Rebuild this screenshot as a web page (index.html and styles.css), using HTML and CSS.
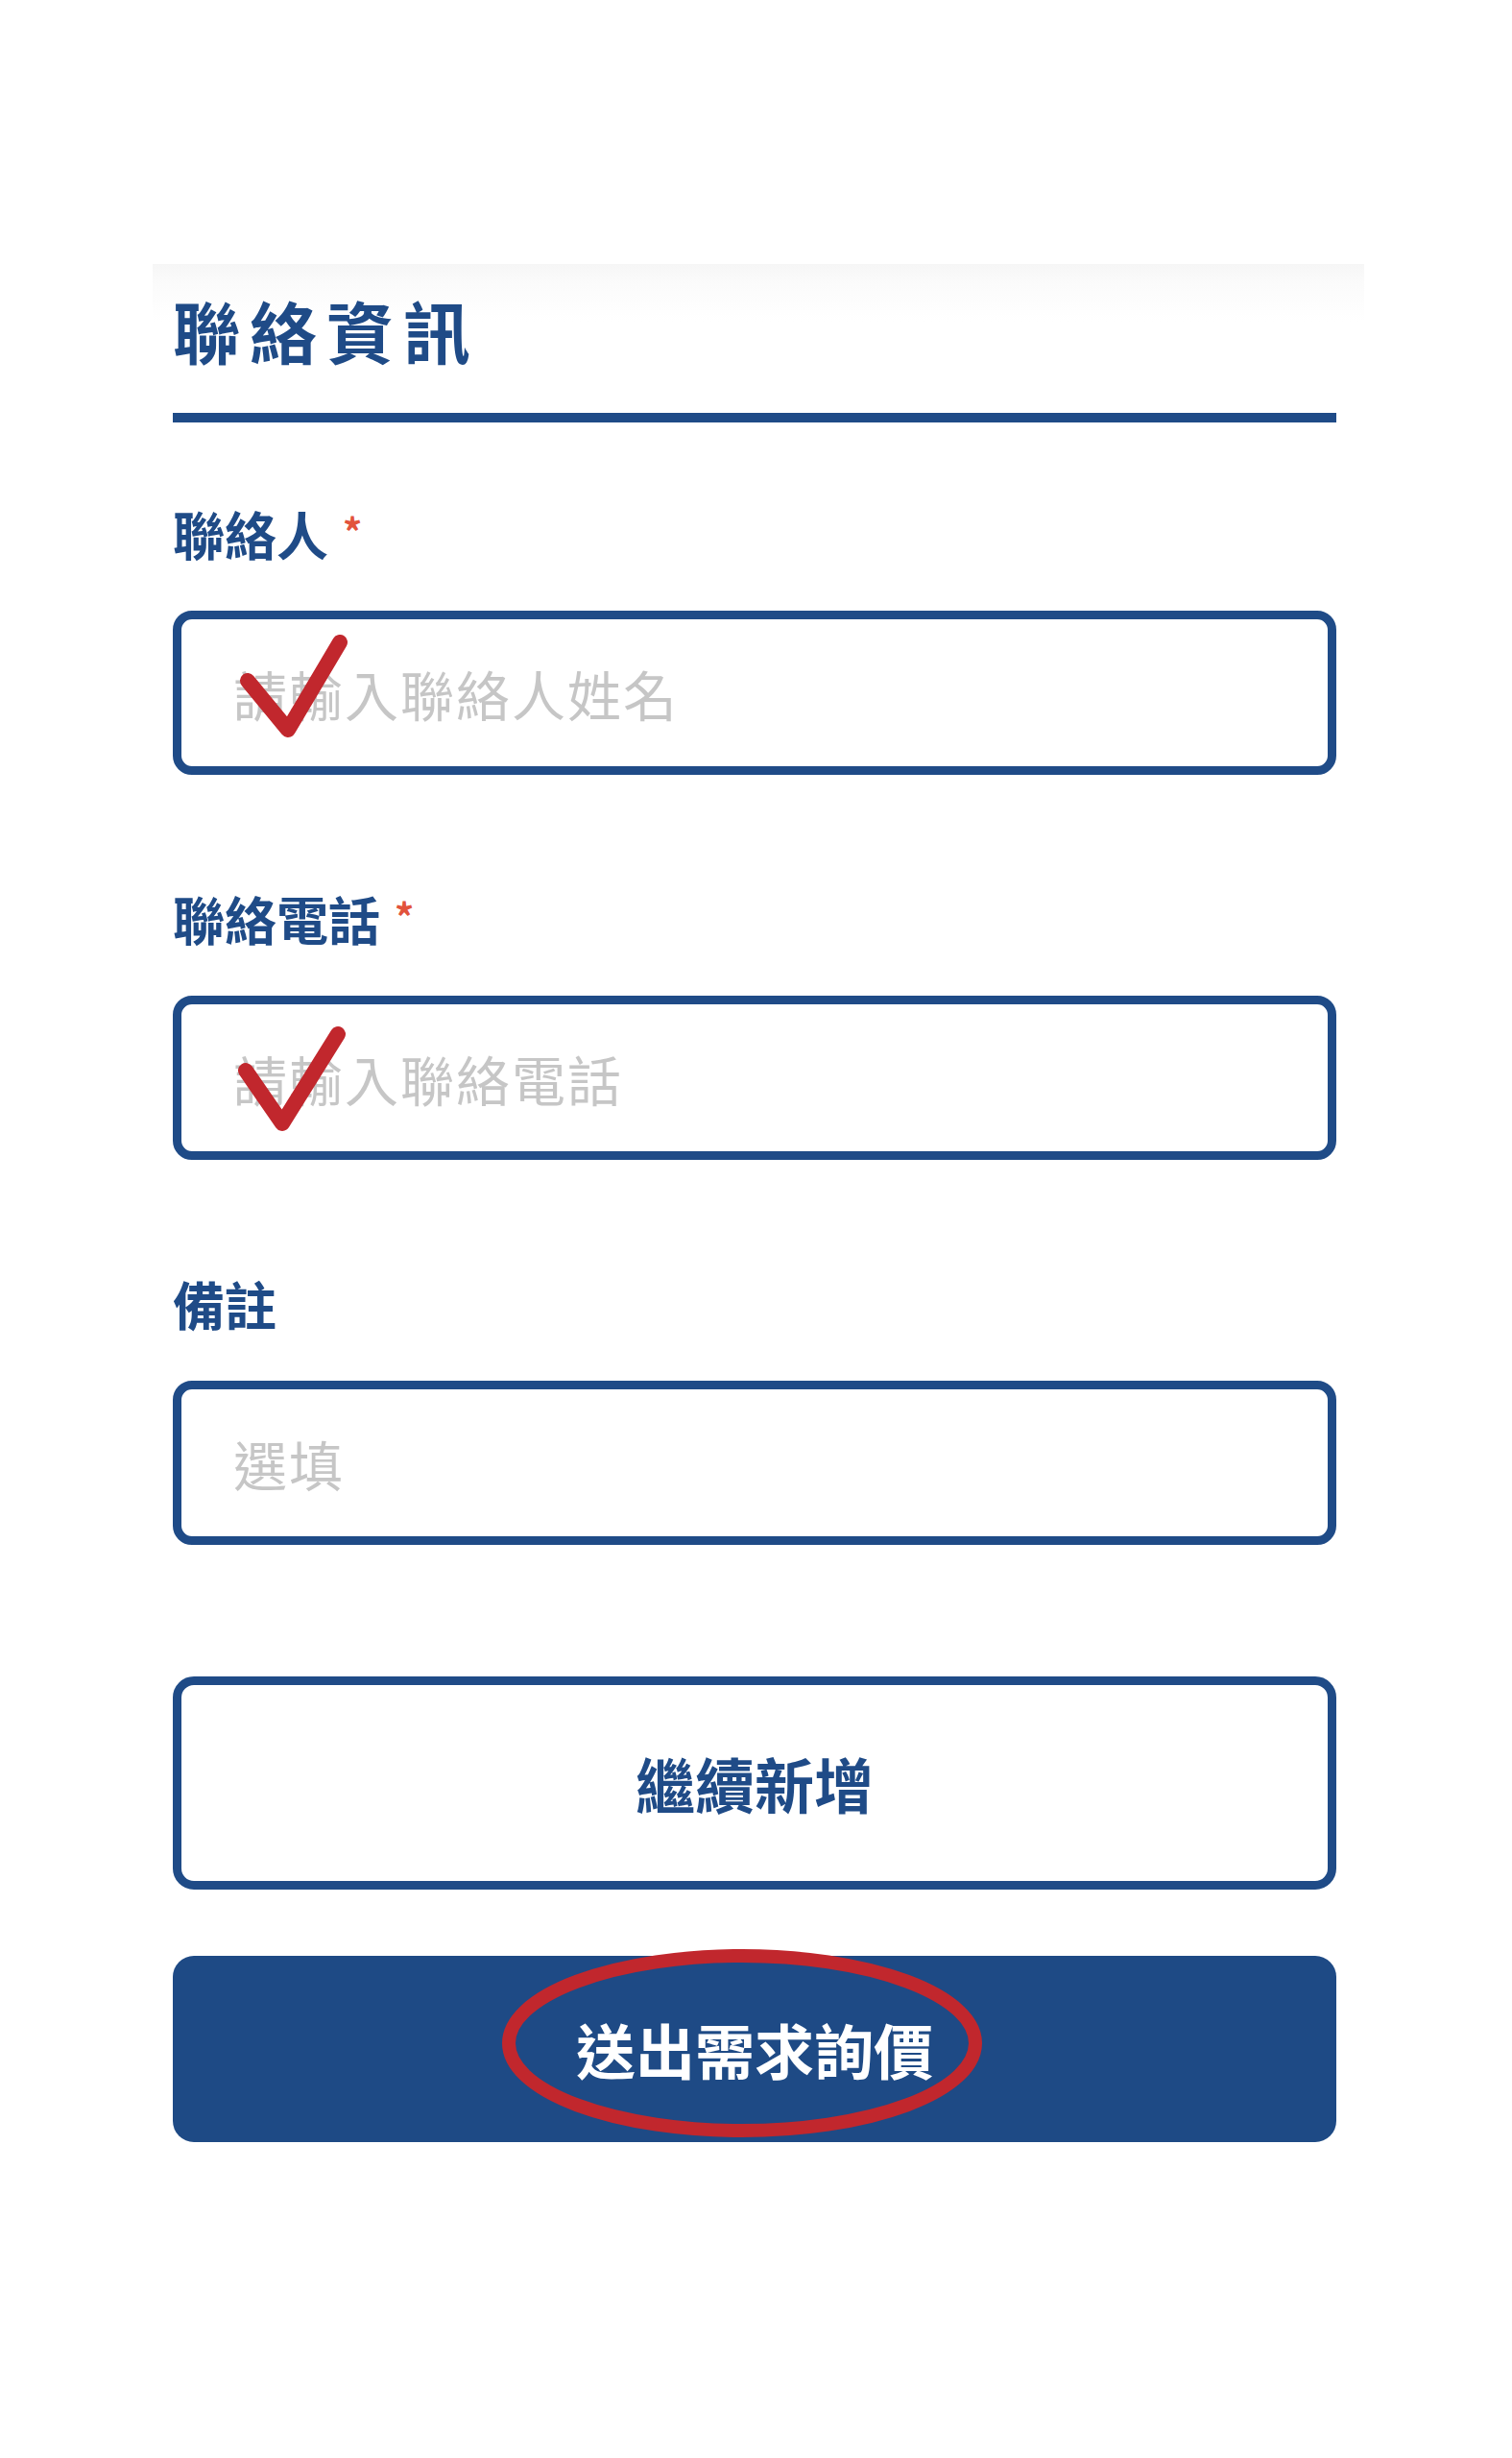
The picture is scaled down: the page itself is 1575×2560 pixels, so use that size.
FILE: index.html
```html
<!DOCTYPE html>
<html lang="zh-Hant">
<head>
<meta charset="utf-8">
<title>聯絡資訊</title>
<link rel="stylesheet" href="styles.css">
</head>
<body>
<main class="card">
  <h2 class="title">聯絡資訊</h2>
  <div class="rule"></div>

  <div class="field">
    <label class="label">聯絡人<span class="req">*</span></label>
    <div class="input-wrap">
      <input class="input" type="text" placeholder="請輸入聯絡人姓名">
      <svg class="check check-a" viewBox="0 0 120 120" aria-hidden="true"><polyline points="10,48 52,99 106,8"/></svg>
    </div>
  </div>

  <div class="field">
    <label class="label">聯絡電話<span class="req">*</span></label>
    <div class="input-wrap">
      <input class="input" type="text" placeholder="請輸入聯絡電話">
      <svg class="check check-b" viewBox="0 0 120 120" aria-hidden="true"><polyline points="10,48 48,103 106,10"/></svg>
    </div>
  </div>

  <div class="field">
    <label class="label">備註</label>
    <div class="input-wrap">
      <input class="input" type="text" placeholder="選填">
    </div>
  </div>

  <div class="actions">
    <button class="btn btn-outline" type="button">繼續新增</button>
    <div class="submit-wrap">
      <button class="btn btn-solid" type="button">送出需求詢價</button>
      <svg class="ring" viewBox="0 0 520 210" aria-hidden="true"><ellipse cx="260" cy="105" rx="243" ry="91"/></svg>
    </div>
  </div>
</main>
</body>
</html>
```
FILE: styles.css
```css
* { box-sizing: border-box; }
html, body { margin: 0; padding: 0; background: #ffffff; }
body {
  font-family: "Noto Sans CJK TC", "Noto Sans", sans-serif;
  color: #1f4b87;
}
.card {
  width: 1262px;
  margin: 275px 0 0 159px;
  padding: 34px 29px 120px 21px;
  background: linear-gradient(#f6f6f6 0, #fbfbfb 20px, #ffffff 60px);
}
.title {
  margin: 0;
  font-size: 70px;
  line-height: 70px;
  font-weight: 700;
  letter-spacing: 10px;
  color: #1f4b87;
}
.rule {
  height: 10px;
  margin-top: 51px;
  background: #1f4b87;
}
.field { margin-top: 89px; }
.field + .field { margin-top: 123px; }
.label {
  display: flex;
  align-items: flex-start;
  font-size: 54px;
  line-height: 54px;
  font-weight: 700;
  color: #1f4b87;
}
.req {
  font-size: 40px;
  line-height: 40px;
  font-weight: 700;
  margin-left: 15px;
  margin-top: 4px;
  color: #e2533c;
}
.input-wrap {
  position: relative;
  margin-top: 53px;
}
.input {
  display: block;
  width: 100%;
  height: 171px;
  border: 9px solid #1f4b87;
  border-radius: 20px;
  padding: 0 0 0 54px;
  font-family: "Noto Sans CJK TC", "Noto Sans", sans-serif;
  font-size: 56px;
  letter-spacing: 2px;
  color: #333;
  background: #fff;
  outline: none;
}
.input::placeholder { color: #c6c6c6; }
.check {
  position: absolute;
  width: 120px;
  height: 120px;
  fill: none;
  stroke: #c1272d;
  stroke-width: 16;
  stroke-linecap: round;
  stroke-linejoin: round;
}
.check-a { left: 68px; top: 25px; }
.check-b { left: 66px; top: 30px; }
.actions {
  margin-top: 137px;
  display: flex;
  flex-direction: column;
  gap: 69px;
}
.btn {
  display: block;
  width: 100%;
  font-family: "Noto Sans CJK TC", "Noto Sans", sans-serif;
  font-weight: 700;
  font-size: 62px;
  line-height: 62px;
  border-radius: 22px;
  cursor: pointer;
}
.btn-outline {
  height: 222px;
  background: #fff;
  border: 9px solid #1f4b87;
  color: #1f4b87;
}
.btn-solid {
  height: 194px;
  background: #1e4a85;
  border: 0;
  color: #ffffff;
}
.submit-wrap { position: relative; }
.ring {
  position: absolute;
  left: 333px;
  top: -14px;
  width: 520px;
  height: 210px;
  fill: none;
  stroke: #c1272d;
  stroke-width: 14;
}
```
